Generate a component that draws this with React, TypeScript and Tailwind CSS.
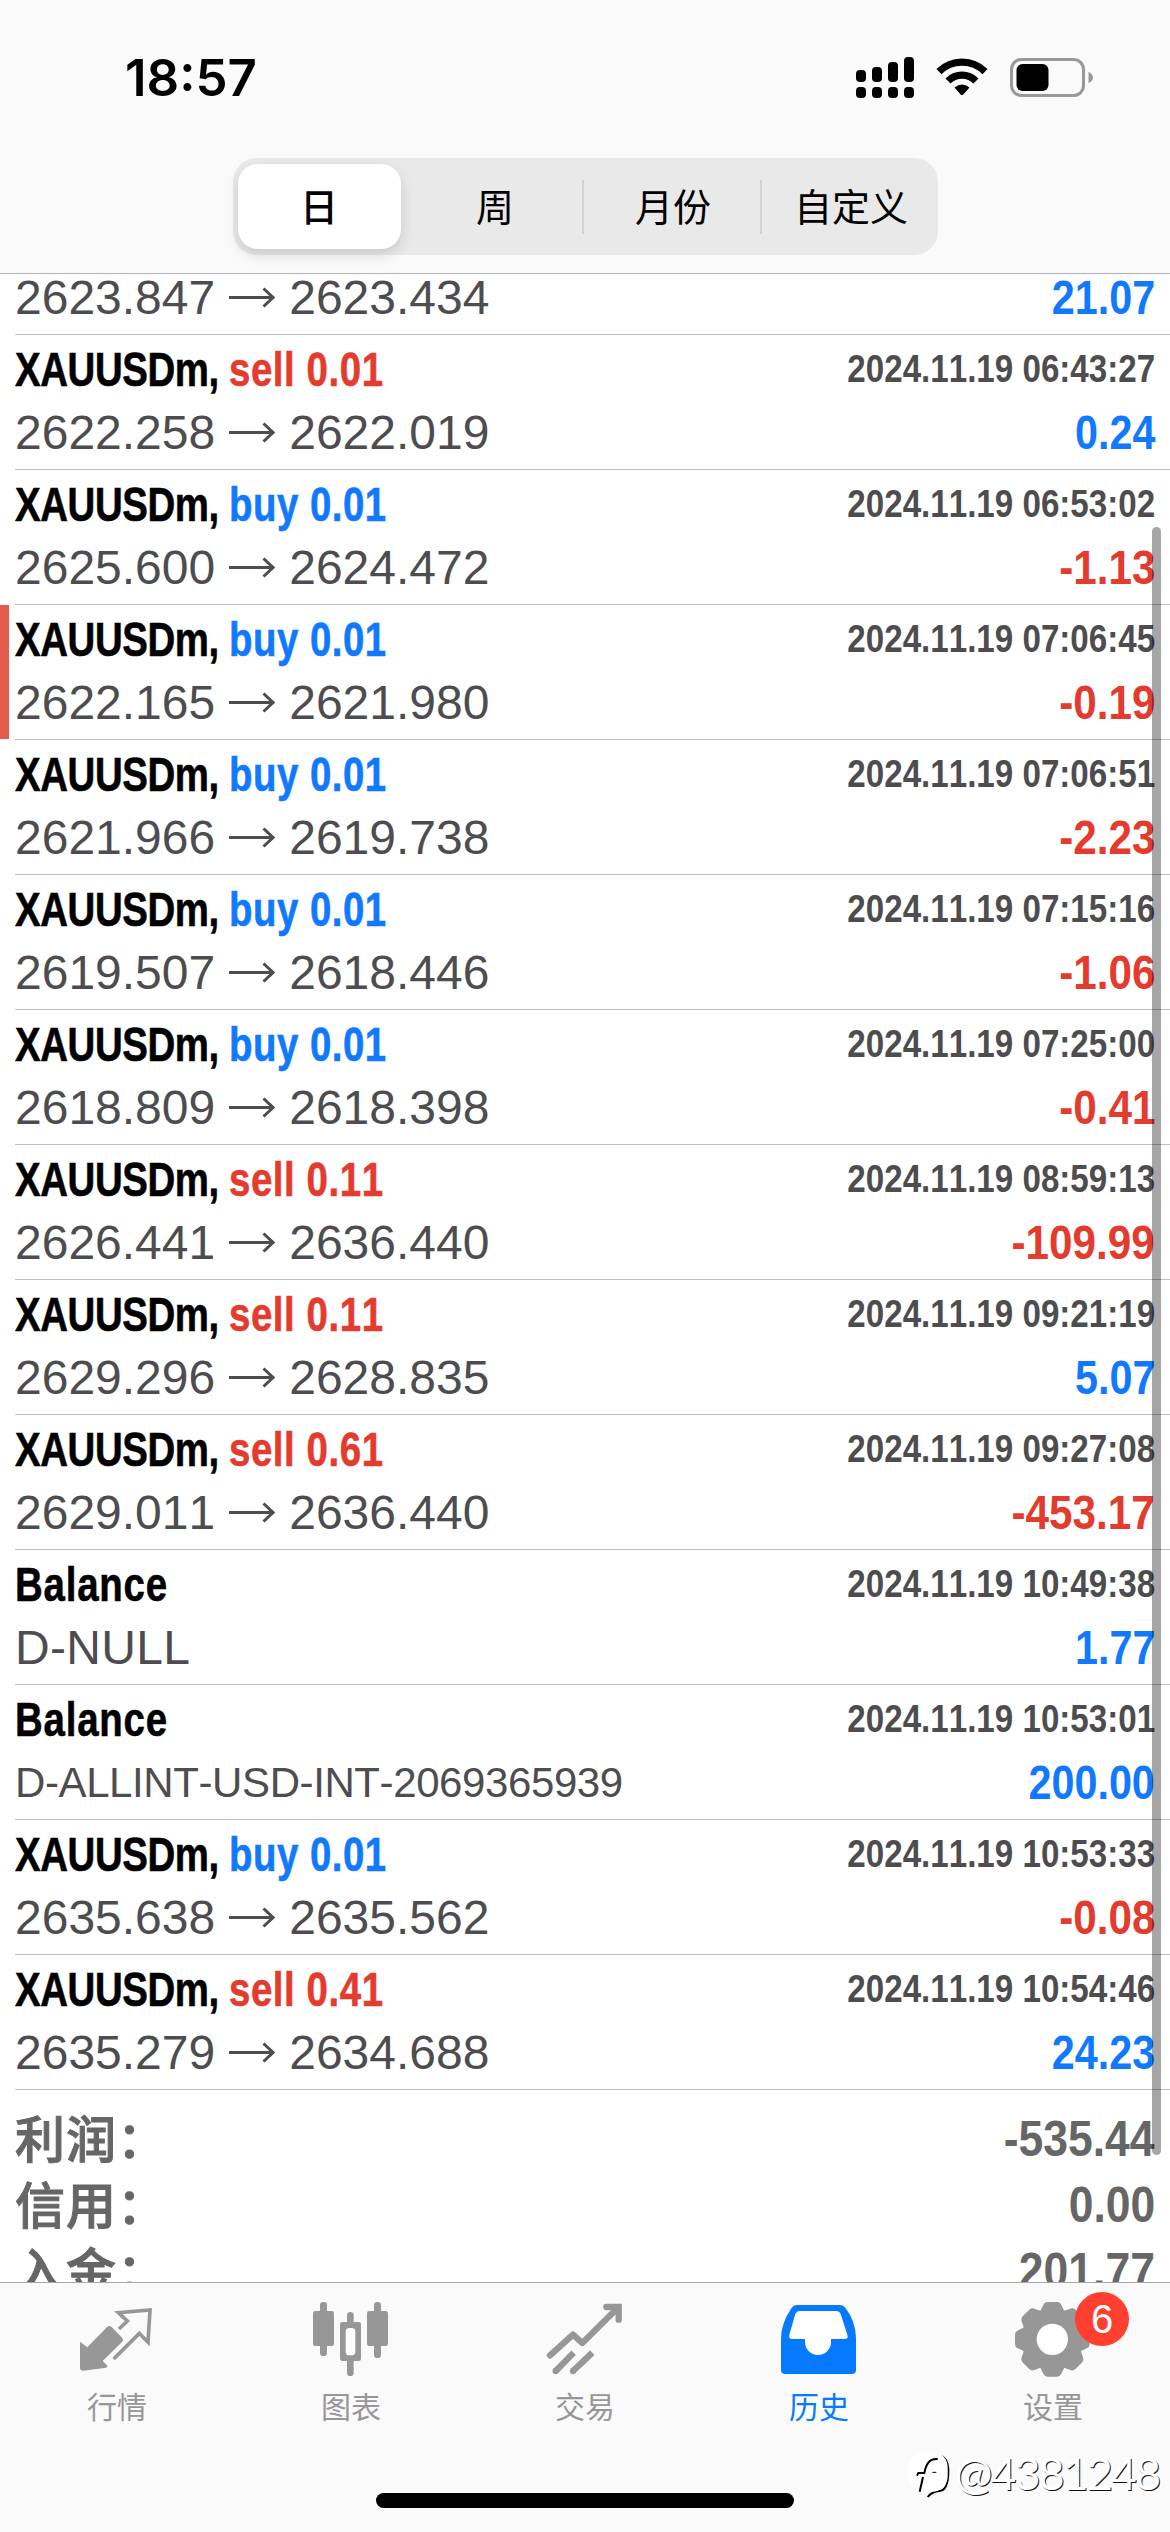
import { clsx } from "clsx";
import type { ReactNode } from "react";

interface Deal {
  title?: string;
  side?: "buy" | "sell";
  volume?: string;
  time?: string;
  open?: string;
  close?: string;
  comment?: string;
  profit: string;
  marked?: boolean;
}

const deals: Deal[] = [
  { open: "2623.847", close: "2623.434", profit: "21.07" },
  { title: "XAUUSDm", side: "sell", volume: "0.01", time: "2024.11.19 06:43:27", open: "2622.258", close: "2622.019", profit: "0.24" },
  { title: "XAUUSDm", side: "buy", volume: "0.01", time: "2024.11.19 06:53:02", open: "2625.600", close: "2624.472", profit: "-1.13" },
  { title: "XAUUSDm", side: "buy", volume: "0.01", time: "2024.11.19 07:06:45", open: "2622.165", close: "2621.980", profit: "-0.19", marked: true },
  { title: "XAUUSDm", side: "buy", volume: "0.01", time: "2024.11.19 07:06:51", open: "2621.966", close: "2619.738", profit: "-2.23" },
  { title: "XAUUSDm", side: "buy", volume: "0.01", time: "2024.11.19 07:15:16", open: "2619.507", close: "2618.446", profit: "-1.06" },
  { title: "XAUUSDm", side: "buy", volume: "0.01", time: "2024.11.19 07:25:00", open: "2618.809", close: "2618.398", profit: "-0.41" },
  { title: "XAUUSDm", side: "sell", volume: "0.11", time: "2024.11.19 08:59:13", open: "2626.441", close: "2636.440", profit: "-109.99" },
  { title: "XAUUSDm", side: "sell", volume: "0.11", time: "2024.11.19 09:21:19", open: "2629.296", close: "2628.835", profit: "5.07" },
  { title: "XAUUSDm", side: "sell", volume: "0.61", time: "2024.11.19 09:27:08", open: "2629.011", close: "2636.440", profit: "-453.17" },
  { title: "Balance", time: "2024.11.19 10:49:38", comment: "D-NULL", profit: "1.77" },
  { title: "Balance", time: "2024.11.19 10:53:01", comment: "D-ALLINT-USD-INT-2069365939", profit: "200.00" },
  { title: "XAUUSDm", side: "buy", volume: "0.01", time: "2024.11.19 10:53:33", open: "2635.638", close: "2635.562", profit: "-0.08" },
  { title: "XAUUSDm", side: "sell", volume: "0.41", time: "2024.11.19 10:54:46", open: "2635.279", close: "2634.688", profit: "24.23" },
];

const totals = [
  { label: "利润：", value: "-535.44" },
  { label: "信用：", value: "0.00" },
  { label: "入金：", value: "201.77" },
];

const periods = ["日", "周", "月份", "自定义"];

function StatusBar() {
  return (
    <div className="flex h-[110px] items-start justify-between pt-[48px] pr-[76px] pl-[125px]">
      <span className="font-['Inter',sans-serif] text-[51px] leading-[60px] font-semibold">18:57</span>
      <div className="flex items-start pt-[7px]">
        {/* sinal */}
        <svg className="h-[44px] w-[62px]" viewBox="0 0 62 44">
          {[16, 13, 8, 3].map((y, i) => (
            <g key={y}>
              <rect x={i * 16 + 2} y={y - 1} width="10" height={28 - y} rx="4" />
              <rect x={i * 16 + 2} y="32" width="10" height="11" rx="4" />
            </g>
          ))}
        </svg>
        {/* wifi */}
        <svg className="ml-[20px] h-[40px] w-[52px]" viewBox="0 0 52 40" fill="none" stroke="#000" strokeWidth="7.2">
          <path d="M3 16.6A32.5 32.5 0 0 1 49 16.6" />
          <path d="M12 26A19.6 19.6 0 0 1 40 26" />
          <path d="M18.5 32.6Q26 26.4 33.5 32.6L26 41Z" fill="#000" stroke="none" />
        </svg>
        {/* bateria */}
        <svg className="ml-[20px] h-[44px] w-[86px]" viewBox="0 0 86 44">
          <rect x="3.5" y="4.5" width="72" height="36" rx="10" fill="none" stroke="#999" strokeWidth="3" />
          <rect x="8.5" y="9" width="32" height="27" rx="6" />
          <path d="M80.500 17Q85 19 85 22.500T80.500 28Z" fill="#999" />
        </svg>
      </div>
    </div>
  );
}

function PeriodTabs() {
  return (
    <div className="mx-auto mt-[48px] flex h-[97px] w-[705px] items-center rounded-[24px] bg-[#e9e9e9] font-['Noto_Sans_CJK_SC',sans-serif] text-[38px]">
      {periods.map((period, i) => (
        <div
          key={period}
          className={clsx(
            "flex h-[54px] flex-1 items-center justify-center",
            i > 0 && "pl-[3px]",
            i > 1 && "border-l-2 border-[#d3d3d3]",
          )}
        >
          {i === 0 ? (
            <span className="flex h-[85px] w-[163px] shrink-0 items-center justify-center rounded-[20px] bg-white pb-[4px] font-medium shadow-[0_6px_14px_rgba(0,0,0,0.13)]">
              {period}
            </span>
          ) : (
            <span className="pb-[4px]">{period}</span>
          )}
        </div>
      ))}
    </div>
  );
}

function Arrow() {
  return (
    <svg
      className="mr-[14px] ml-[14px] h-[22px] w-[46px] shrink-0"
      viewBox="0 1 46 22"
      fill="none"
      stroke="currentColor"
      strokeWidth="3"
    >
      <path d="M0 11.500H44M34.500 2.500L44 11.500L34.500 20.500" />
    </svg>
  );
}

function DealRow({ deal }: { deal: Deal }) {
  const loss = deal.profit.startsWith("-");

  return (
    <div className="relative flex h-[135px] shrink-0 items-stretch">
      {deal.marked && <span className="absolute top-0 left-0 h-[134px] w-[9px] bg-[#e15c4d]" />}
      <div className="ml-[15px] flex flex-1 justify-between border-b border-[#bfbfc1] pr-[15px]">
        <div className="flex flex-col items-start whitespace-nowrap">
          <p className="h-[69px] origin-left scale-x-[0.8] text-[48px] leading-[69px] font-bold [-webkit-text-stroke:0.6px_currentColor]">
            {deal.title && (
              <span className={deal.side ? "tracking-[-0.5px]" : "tracking-[1px]"}>
                {deal.title}
                {deal.side && ", "}
              </span>
            )}
            {deal.side && (
              <span className={deal.side === "buy" ? "tracking-[0.6px] text-[#1079fe]" : "tracking-[0.7px] text-[#e33b2e]"}>
                {deal.side} {deal.volume}
              </span>
            )}
          </p>
          {deal.comment ? (
            <p
              className={clsx(
                "leading-[57px] text-[#4d4d50]",
                deal.comment.length > 10 ? "text-[42px] tracking-[-0.4px]" : "text-[48px] tracking-[0.3px]",
              )}
            >
              {deal.comment}
            </p>
          ) : (
            <p className="flex items-center text-[48px] leading-[57px] text-[#4d4d50]">
              {deal.open}
              <Arrow />
              {deal.close}
            </p>
          )}
        </div>
        <div className="flex flex-col items-end font-bold whitespace-nowrap">
          <p className="h-[67px] origin-right scale-x-[0.85] text-[39px] leading-[67px] text-[#4d4d50]">{deal.time}</p>
          <p
            className={clsx(
              "origin-right text-[48px] leading-[61px]",
              loss ? "scale-x-[0.88] text-[#e33b2e]" : "scale-x-[0.86] text-[#1079fe]",
            )}
          >
            {deal.profit}
          </p>
        </div>
      </div>
    </div>
  );
}

const QuotesIcon = () => (
  <svg className="h-[80px] w-[80px]" viewBox="231 90 240 240" fill="currentColor">
    <path d="M240 215L262 232L321 171Q328 165 335 171L366 203Q372 210 366 216L308 273L323 288Q322 292 318 293L250 302Q240 302 240 294Z" />
    <path
      d="M357 177L382 153L355 128L450 120L444 217L418 190L341 267"
      fill="none"
      stroke="currentColor"
      strokeWidth="11"
    />
  </svg>
);

const ChartIcon = () => (
  <svg className="h-[80px] w-[80px]" viewBox="933 90 240 240" fill="currentColor">
    <rect x="960" y="96" width="21" height="162" rx="10" />
    <rect x="939" y="123" width="63" height="105" rx="7" />
    <rect x="1122" y="96" width="21" height="168" rx="10" />
    <rect x="1101" y="123" width="63" height="105" rx="7" />
    <rect x="1041" y="126" width="20" height="192" rx="10" />
    <rect x="1020" y="156" width="63" height="117" rx="7" />
    <rect x="1037" y="174" width="29" height="82" rx="11" fill="#fff" />
  </svg>
);

const TradeIcon = () => (
  <svg
    className="h-[80px] w-[80px]"
    viewBox="435 90 240 240"
    fill="none"
    stroke="currentColor"
    strokeWidth="19"
    strokeLinecap="round"
  >
    <path d="M450 256L519 194L547 219L652 115" strokeLinejoin="round" />
    <path d="M619 111H656V149" />
    <path d="M467 303L521 248" strokeLinecap="butt" />
    <path d="M519 303L577 248" strokeLinecap="butt" />
    <path d="M467 303h.1M519 303h.1" />
  </svg>
);

const HistoryIcon = () => (
  <svg className="h-[80px] w-[80px]" viewBox="27 90 240 240" fill="currentColor">
    <path d="M80 105H210Q220 105 226 113Q258 155 258 205V299Q258 312 245 312H46Q33 312 33 299V205Q33 160 65 113Q70 105 80 105Z" />
    <path
      d="M90 123Q80 123 76 132L58 194Q55 207 67 207H105V216A39 39 0 0 0 183 216V207H224Q236 207 232 194L212 132Q208 123 198 123Z"
      fill="#fff"
    />
  </svg>
);

const SettingsIcon = () => (
  <svg className="h-[80px] w-[80px]" viewBox="729 90 240 240" fill="currentColor">
    <g transform="translate(847 208)">
      <circle r="89" />
      {[0, 45, 90, 135, 180, 225, 270, 315].map((angle) => (
        <path
          key={angle}
          d="M-42 -78Q-33 -88 -30 -97L-26 -105Q-23 -112 -14 -112H14Q23 -112 26 -105L30 -97Q33 -88 42 -78Z"
          transform={`rotate(${angle})`}
        />
      ))}
      <circle r="47" fill="#fff" />
    </g>
  </svg>
);

const tabs: { label: string; icon: ReactNode; active?: boolean; badge?: string }[] = [
  { label: "行情", icon: <QuotesIcon /> },
  { label: "图表", icon: <ChartIcon /> },
  { label: "交易", icon: <TradeIcon /> },
  { label: "历史", icon: <HistoryIcon />, active: true },
  { label: "设置", icon: <SettingsIcon />, badge: "6" },
];

export default function App() {
  return (
    <div className="relative flex h-[2532px] w-[1170px] flex-col overflow-hidden bg-white font-['Liberation_Sans',sans-serif] text-black [font-kerning:none]">
      <header className="h-[274px] shrink-0 border-b border-[#b2b2b2] bg-[#fafafa]">
        <StatusBar />
        <PeriodTabs />
      </header>

      <main className="relative h-[2008px] shrink-0 overflow-hidden">
        <div className="-mt-[74px]">
          {deals.map((deal, i) => (
            <DealRow key={i} deal={deal} />
          ))}
          <div className="pt-[16px] pr-[15px] pl-[15px] text-[50px] leading-[66px] font-bold text-[#666]">
            {totals.map((total) => (
              <div key={total.label} className="flex h-[66px] justify-between">
                <span className="-mt-[3px] font-['Noto_Sans_CJK_SC',sans-serif] font-medium tracking-[1px] [-webkit-text-stroke:1px_currentColor]">
                  {total.label}
                </span>
                <span className="origin-right scale-x-[0.89]">{total.value}</span>
              </div>
            ))}
          </div>
        </div>
        {/* barra de rolagem */}
        <span className="absolute top-[253px] right-[9px] h-[1628px] w-[9px] rounded-full bg-black/35" />
      </main>

      <nav className="relative flex flex-1 flex-col border-t border-[#a8a8a8] bg-[#fafafa]">
        <div className="flex pt-[17px]">
          {tabs.map((tab) => (
            <div
              key={tab.label}
              className={clsx("relative flex flex-1 flex-col items-center", tab.active ? "text-[#057aff]" : "text-[#979797]")}
            >
              {tab.icon}
              <span className="mt-[4px] font-['Noto_Sans_CJK_SC',sans-serif] text-[30px] leading-[42px]">{tab.label}</span>
              {tab.badge && (
                <span className="absolute -top-[8px] left-[139px] flex h-[54px] w-[54px] items-center justify-center rounded-full bg-[#ff3f30] text-[40px] leading-none text-white">
                  {tab.badge}
                </span>
              )}
            </div>
          ))}
        </div>
        <div className="absolute top-[160px] right-[11px] flex items-center">
          <svg className="mt-[6px] h-[54px] w-[46px]" viewBox="0 0 138 162">
            <path
              d="M96 20Q124 24 124 66Q124 124 98 126Q74 128 62 144"
              fill="none"
              stroke="#000"
              strokeWidth="6"
            />
            <rect x="0" y="8" width="122" height="120" rx="46" fill="#fff" />
            <path d="M92 30Q60 26 52 72H34L30 80M48 84L38 128" fill="none" stroke="#000" strokeWidth="6" />
            <path d="M76 70H88" stroke="#000" strokeWidth="3" />
          </svg>
          <span className="ml-[2px] font-['Lato',sans-serif] text-[45px] leading-[52px] tracking-[-2px] text-white [text-shadow:1px_1px_0_#111]">
            @4381248
          </span>
        </div>
        <div className="absolute bottom-[24px] left-[376px] h-[15px] w-[418px] rounded-full bg-black" />
      </nav>
    </div>
  );
}
